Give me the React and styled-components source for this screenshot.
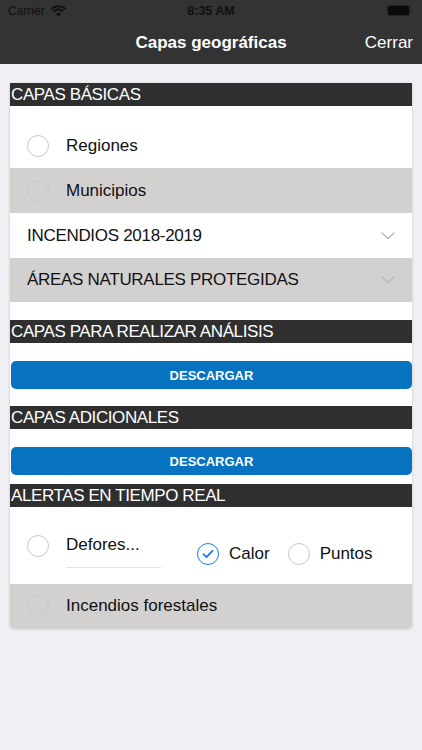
import React from "react";
import styled, { createGlobalStyle } from "styled-components";

const GlobalStyle = createGlobalStyle`
  body {
    margin: 0;
    background: #efeff4;
    font-family: "Liberation Sans", Arial, sans-serif;
  }
`;

const App = () => {
  return (
    <>
      <GlobalStyle />
      <Screen>
        <TopBar>
          <StatusBar>
            <Carrier>
              Carrier
              <svg width="17" height="12" viewBox="0 0 17 12">
                <path
                  d="M8.5 2.2c2.5 0 4.7 1 6.4 2.6l1.3-1.4C14.2 1.4 11.5.2 8.5.2S2.8 1.4.8 3.4l1.3 1.4C3.8 3.2 6 2.2 8.5 2.2z"
                  fill="#111"
                />
                <path
                  d="M8.5 5.6c1.6 0 3 .6 4.1 1.6l1.3-1.4C12.5 4.4 10.6 3.6 8.5 3.6S4.5 4.4 3.1 5.8l1.3 1.4c1.1-1 2.5-1.6 4.1-1.6z"
                  fill="#111"
                />
                <path d="M8.5 11.6l2.6-2.8c-.7-.6-1.6-1-2.6-1s-1.9.4-2.6 1z" fill="#111" />
              </svg>
            </Carrier>
            <Clock>8:35 AM</Clock>
            <Battery>
              <BatteryBody />
              <BatteryTip />
            </Battery>
          </StatusBar>
          <NavBar>
            <NavTitle>Capas geográficas</NavTitle>
            <NavAction>Cerrar</NavAction>
          </NavBar>
        </TopBar>

        <Card>
          <SectionHeader>CAPAS BÁSICAS</SectionHeader>
          <RadioRow $height={62} $pad={18}>
            <Radio />
            <RowLabel>Regiones</RowLabel>
          </RadioRow>
          <RadioRow $gray $height={45}>
            <Radio $faint />
            <RowLabel>Municipios</RowLabel>
          </RadioRow>
          <DropRow $height={45}>
            <DropLabel>INCENDIOS 2018-2019</DropLabel>
            <Chevron />
          </DropRow>
          <DropRow $gray $height={44}>
            <DropLabel>ÁREAS NATURALES PROTEGIDAS</DropLabel>
            <Chevron />
          </DropRow>
          <Spacer $h={18} />

          <SectionHeader>CAPAS PARA REALIZAR ANÁLISIS</SectionHeader>
          <ButtonWrap>
            <DownloadButton>DESCARGAR</DownloadButton>
          </ButtonWrap>

          <SectionHeader>CAPAS ADICIONALES</SectionHeader>
          <ButtonWrap $bottom={9}>
            <DownloadButton>DESCARGAR</DownloadButton>
          </ButtonWrap>

          <SectionHeader>ALERTAS EN TIEMPO REAL</SectionHeader>
          <AlertRow>
            <AlertMain>
              <Radio />
              <AlertName>Defores...</AlertName>
            </AlertMain>
            <Options>
              <Option>
                <Radio $checked>
                  <svg width="12" height="10" viewBox="0 0 12 10">
                    <path
                      d="M1.5 5.2l3 3L10.5 1.8"
                      fill="none"
                      stroke="#1a7ae2"
                      strokeWidth="1.8"
                      strokeLinecap="round"
                      strokeLinejoin="round"
                    />
                  </svg>
                </Radio>
                <OptionLabel>Calor</OptionLabel>
              </Option>
              <Option>
                <Radio />
                <OptionLabel>Puntos</OptionLabel>
              </Option>
            </Options>
          </AlertRow>
          <RadioRow $gray $height={44}>
            <Radio $faint />
            <RowLabel>Incendios forestales</RowLabel>
          </RadioRow>
        </Card>
      </Screen>
    </>
  );
};

const Chevron = () => (
  <ChevronBox>
    <svg width="14" height="8" viewBox="0 0 14 8">
      <path
        d="M1 1l6 5.5L13 1"
        fill="none"
        stroke="#b9b9be"
        strokeWidth="1.5"
        strokeLinecap="round"
        strokeLinejoin="round"
      />
    </svg>
  </ChevronBox>
);

const Screen = styled.div`
  width: 422px;
  min-height: 750px;
  background: #efeff4;
  overflow: hidden;
`;

const TopBar = styled.div`
  background: #333333;
`;

const StatusBar = styled.div`
  height: 21px;
  display: grid;
  grid-template-columns: 1fr auto 1fr;
  align-items: center;
  padding: 0 8px;
  color: #111;
`;

const Carrier = styled.div`
  display: flex;
  align-items: center;
  gap: 5px;
  font-size: 12px;
`;

const Clock = styled.div`
  font-size: 12.5px;
  font-weight: bold;
`;

const Battery = styled.div`
  justify-self: end;
  display: flex;
  align-items: center;
  margin-right: 2px;
`;

const BatteryBody = styled.div`
  width: 21px;
  height: 9px;
  border-radius: 3px;
  background: #0a0a0a;
  border: 1px solid #222;
`;

const BatteryTip = styled.div`
  width: 1.5px;
  height: 4px;
  background: #222;
  margin-left: 1px;
`;

const NavBar = styled.div`
  height: 43px;
  display: flex;
  align-items: center;
  justify-content: center;
  position: relative;
`;

const NavTitle = styled.div`
  color: #fff;
  font-size: 17px;
  font-weight: bold;
  padding-top: 1px;
`;

const NavAction = styled.div`
  position: absolute;
  right: 9px;
  top: 0;
  bottom: 0;
  display: flex;
  align-items: center;
  padding-top: 1px;
  color: #fff;
  font-size: 17px;
`;

const Card = styled.div`
  margin: 19px 10px 0 10px;
  background: #fff;
  border-radius: 0 0 4px 4px;
  overflow: hidden;
  box-shadow: 0 1px 3px rgba(0, 0, 0, 0.18);
`;

const SectionHeader = styled.div`
  background: #2f2f2f;
  color: #fff;
  height: 23px;
  line-height: 23px;
  padding-left: 1px;
  font-size: 17px;
  letter-spacing: -0.4px;
  white-space: nowrap;
  overflow: hidden;
`;

const RadioRow = styled.div`
  height: ${(p) => p.$height}px;
  box-sizing: border-box;
  padding-top: ${(p) => p.$pad || 0}px;
  display: flex;
  align-items: center;
  background: ${(p) => (p.$gray ? "#d3d0d0" : "#fff")};
  padding-left: 17px;
`;

const Radio = styled.div`
  width: 22px;
  height: 22px;
  border-radius: 50%;
  box-sizing: border-box;
  border: ${(p) => (p.$checked ? 1.5 : 1)}px solid
    ${(p) => (p.$checked ? "#1a7ae2" : p.$faint ? "#cbc8c8" : "#c9c9cc")};
  background: ${(p) => (p.$faint ? "#d3d0d0" : "#fff")};
  display: flex;
  align-items: center;
  justify-content: center;
  flex-shrink: 0;
`;

const RowLabel = styled.div`
  margin-left: 17px;
  font-size: 17px;
  color: #111;
`;

const DropRow = styled.div`
  height: ${(p) => p.$height}px;
  display: flex;
  align-items: center;
  justify-content: space-between;
  padding: 0 16px 0 17px;
  background: ${(p) => (p.$gray ? "#d3d0d0" : "#fff")};
`;

const DropLabel = styled.div`
  font-size: 17px;
  letter-spacing: -0.3px;
  color: #111;
`;

const ChevronBox = styled.div`
  display: flex;
  align-items: center;
  margin-right: 1px;
`;

const Spacer = styled.div`
  height: ${(p) => p.$h}px;
`;

const ButtonWrap = styled.div`
  padding: 18px 0 ${(p) => (p.$bottom !== undefined ? p.$bottom : 17)}px 1px;
`;

const DownloadButton = styled.div`
  height: 28px;
  border-radius: 5px;
  background: #0672c0;
  color: #fff;
  font-size: 13px;
  font-weight: bold;
  display: flex;
  align-items: center;
  justify-content: center;
`;

const AlertRow = styled.div`
  height: 77px;
  display: flex;
  align-items: flex-start;
  padding: 28px 0 0 17px;
  box-sizing: border-box;
`;

const AlertMain = styled.div`
  display: flex;
  align-items: flex-start;
`;

const AlertName = styled.div`
  margin-left: 17px;
  width: 95px;
  font-size: 17px;
  color: #111;
  padding-bottom: 12px;
  border-bottom: 1px solid #e3e3e6;
  line-height: 20px;
`;

const Options = styled.div`
  display: flex;
  gap: 18px;
  margin-left: 36px;
  margin-top: 8px;
`;

const Option = styled.div`
  display: flex;
  align-items: center;
  gap: 10px;
`;

const OptionLabel = styled.div`
  font-size: 17px;
  color: #111;
`;

export default App;
